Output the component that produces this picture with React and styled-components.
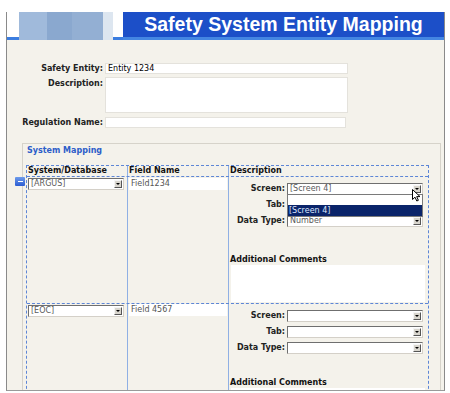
import React from 'react';
import styled, { createGlobalStyle } from 'styled-components';

const GlobalStyle = createGlobalStyle`
  html, body { margin: 0; padding: 0; background: #fff; }
  body {
    font-family: "DejaVu Sans", Verdana, sans-serif;
    font-size: 8px;
    color: #111;
  }
`;

const Page = styled.div`
  width: 450px;
  height: 393px;
  box-sizing: border-box;
  padding: 12px 0 0 6px;
  overflow: hidden;
`;

const Frame = styled.div`
  width: 439px;
  height: 379px;
  box-sizing: border-box;
  border-left: 1px solid #8a8a8a;
  border-right: 1px solid #8a8a8a;
  border-bottom: 1px solid #9a9a9a;
  background: #f4f2eb;
  overflow: hidden;
  display: flex;
  flex-direction: column;
`;

// header strip
const Header = styled.div`
  display: flex;
  height: 28px;
  flex-shrink: 0;
`;

const Spacer = styled.div`
  width: ${p => p.$w}px;
  background: #fff;
  border-bottom: 3px solid #3b7de0;
`;

const Stripes = styled.div`
  width: 84px;
  background: linear-gradient(to right,
    #a0badb 0, #a0badb 28px,
    #8aa8cf 28px, #8aa8cf 53px,
    #93afd3 53px, #93afd3 84px);
`;

const Pale = styled.div`
  width: 10px;
  background: #dde6f0;
`;

const TitleBar = styled.div`
  flex: 1;
  background: #1c4fc8;
  border-bottom: 3px solid #4486e2;
  display: flex;
  align-items: center;
  justify-content: center;
`;

const Title = styled.h1`
  margin: 0;
  font-family: "Liberation Sans", Arial, sans-serif;
  font-weight: bold;
  font-size: 19.5px;
  color: #fff;
`;

// top form
const Form = styled.div`
  display: grid;
  grid-template-columns: 96px auto;
  column-gap: 2px;
  row-gap: 3px;
  padding-top: 23px;
  align-items: start;
`;

const Label = styled.div`
  font-weight: bold;
  color: #222;
  text-align: right;
  line-height: 11px;
  white-space: nowrap;
  margin-top: ${p => p.$mt || 0}px;
`;

const TextInput = styled.div`
  width: ${p => p.$w || 243}px;
  height: ${p => p.$h || 11}px;
  box-sizing: border-box;
  background: #fff;
  border: 1px solid #e4e2dc;
  padding-left: 2px;
  line-height: 9px;
  color: #000;
  margin-top: ${p => p.$mt || 0}px;
`;

// system mapping section
const Section = styled.div`
  margin: 15px 3px 0 15px;
  border: 1px solid #d6d3ca;
  border-bottom: none;
  padding: 2px 0 0 3px;
  flex: 1;
`;

const SectionTitle = styled.div`
  color: #2d5ec9;
  font-weight: bold;
  line-height: 10px;
  padding-left: 1px;
  margin-bottom: 9px;
`;

const Table = styled.div`
  width: 401px;
  border: 1px dashed #5d86d6;
  border-bottom: none;
`;

const HeadRow = styled.div`
  display: grid;
  grid-template-columns: 101px 101px 1fr;
  height: 10px;
`;

const HeadCell = styled.div`
  font-weight: bold;
  line-height: 10px;
  padding-left: 1px;
  border-right: ${p => (p.$last ? 'none' : '1px solid #8fb0e4')};
`;

const Row = styled.div`
  position: relative;
  display: grid;
  grid-template-columns: 101px 101px 1fr;
  border-top: 1px dashed #5d86d6;
  height: ${p => (p.$h ? `${p.$h}px` : 'auto')};
`;

const Cell = styled.div`
  border-right: ${p => (p.$last ? 'none' : '1px solid #8fb0e4')};
  padding: ${p => p.$pad || '1px 0 0 1px'};
  box-sizing: border-box;
`;

const RemoveBtn = styled.div`
  position: absolute;
  left: -12px;
  top: 0;
  width: 10px;
  height: 9px;
  background: linear-gradient(#6d9bea, #2b5cd2);
  border-radius: 1px;
  display: flex;
  align-items: center;
  justify-content: center;
  &::after {
    content: '';
    width: 5px;
    height: 1px;
    background: #fff;
  }
`;

const SelectBox = styled.div`
  position: relative;
  width: ${p => p.$w}px;
  height: 12px;
  box-sizing: border-box;
  background: #fff;
  border: 1px solid;
  border-color: #6f6f6f #d4d0c8 #d4d0c8 #6f6f6f;
  display: flex;
  align-items: center;
`;

const SelectText = styled.span`
  flex: 1;
  padding-left: 2px;
  color: #5a5a5a;
  line-height: 10px;
  white-space: nowrap;
  overflow: hidden;
`;

const ArrowBtn = styled.span`
  width: 8px;
  height: 8px;
  margin-right: 1px;
  box-sizing: border-box;
  background: #d8d5cd;
  border: 1px solid;
  border-color: #f4f4f4 #555 #555 #f4f4f4;
  display: flex;
  align-items: center;
  justify-content: center;
  &::after {
    content: '';
    border-left: 2px solid transparent;
    border-right: 2px solid transparent;
    border-top: 2px solid #000;
  }
`;

const FieldBox = styled.div`
  width: 98px;
  height: 12px;
  background: #fff;
  color: #555;
  line-height: 11px;
  padding-left: 2px;
  box-sizing: border-box;
`;

const DescGrid = styled.div`
  display: grid;
  grid-template-columns: 56px 136px;
  column-gap: 2px;
  row-gap: 4px;
  align-items: center;
`;

const DescLabel = styled.div`
  font-weight: bold;
  color: #222;
  text-align: right;
  line-height: 12px;
  white-space: nowrap;
`;

const Dropdown = styled.div`
  position: absolute;
  left: -1px;
  top: 10px;
  width: 136px;
  background: #fff;
  border: 1px solid #7a7a7a;
  box-sizing: border-box;
  z-index: 2;
`;

const Option = styled.div`
  height: ${p => p.$h}px;
  line-height: ${p => p.$h}px;
  padding-left: 1px;
  background: ${p => (p.$active ? '#0a246a' : '#fff')};
  color: ${p => (p.$active ? '#dfe8ff' : '#333')};
`;

const Cursor = styled.svg`
  position: absolute;
  right: 0;
  top: 5px;
  z-index: 3;
`;

const CommentsLabel = styled.div`
  font-weight: bold;
  line-height: 10px;
  margin-top: ${p => p.$mt}px;
  padding-left: 1px;
`;

const CommentsBox = styled.div`
  width: 194px;
  height: 37px;
  margin-left: 2px;
  background: #fff;
`;

const Select = ({ w, value, children }) => (
  <SelectBox $w={w}>
    <SelectText>{value}</SelectText>
    <ArrowBtn />
    {children}
  </SelectBox>
);

const Description = ({ screen, type, open, gap }) => (
  <>
    <DescGrid>
      <DescLabel>Screen:</DescLabel>
      <Select w={136} value={screen}>
        {open && (
          <>
            <Dropdown>
              <Option $h={10} />
              <Option $h={11} $active>[Screen 4]</Option>
            </Dropdown>
            <Cursor width="10" height="13" viewBox="0 0 10 13">
              <path d="M0.5 0.5 L0.5 10.5 L3 8.2 L4.8 12 L6.4 11.3 L4.7 7.6 L8 7.6 Z" fill="#fff" stroke="#000" strokeWidth="1" />
            </Cursor>
          </>
        )}
      </Select>
      <DescLabel>Tab:</DescLabel>
      <Select w={136} value="" />
      <DescLabel>Data Type:</DescLabel>
      <Select w={136} value={type} />
    </DescGrid>
    <CommentsLabel $mt={gap}>Additional Comments</CommentsLabel>
    <CommentsBox />
  </>
);

export default function App() {
  return (
    <>
      <GlobalStyle />
      <Page>
        <Frame>
          <Header>
            <Spacer $w={12} />
            <Stripes />
            <Pale />
            <Spacer $w={10} />
            <TitleBar>
              <Title>Safety System Entity Mapping</Title>
            </TitleBar>
          </Header>

          <Form>
            <Label>Safety Entity:</Label>
            <TextInput>Entity 1234</TextInput>
            <Label $mt={1}>Description:</Label>
            <TextInput $h={36} />
            <Label $mt={1}>Regulation Name:</Label>
            <TextInput $w={241} $mt={1} />
          </Form>

          <Section>
            <SectionTitle>System Mapping</SectionTitle>
            <Table>
              <HeadRow>
                <HeadCell>System/Database</HeadCell>
                <HeadCell>Field Name</HeadCell>
                <HeadCell $last>Description</HeadCell>
              </HeadRow>

              <Row $h={126}>
                <RemoveBtn />
                <Cell>
                  <Select w={96} value="[ARGUS]" />
                </Cell>
                <Cell>
                  <FieldBox>Field1234</FieldBox>
                </Cell>
                <Cell $last $pad="6px 0 0 0">
                  <Description screen="[Screen 4]" type="Number" open gap={28} />
                </Cell>
              </Row>

              <Row $h={120}>
                <Cell>
                  <Select w={96} value="[EOC]" />
                </Cell>
                <Cell $pad="0 0 0 1px">
                  <FieldBox>Field 4567</FieldBox>
                </Cell>
                <Cell $last $pad="6px 0 0 0">
                  <Description screen="" type="" gap={24} />
                </Cell>
              </Row>
            </Table>
          </Section>
        </Frame>
      </Page>
    </>
  );
}
